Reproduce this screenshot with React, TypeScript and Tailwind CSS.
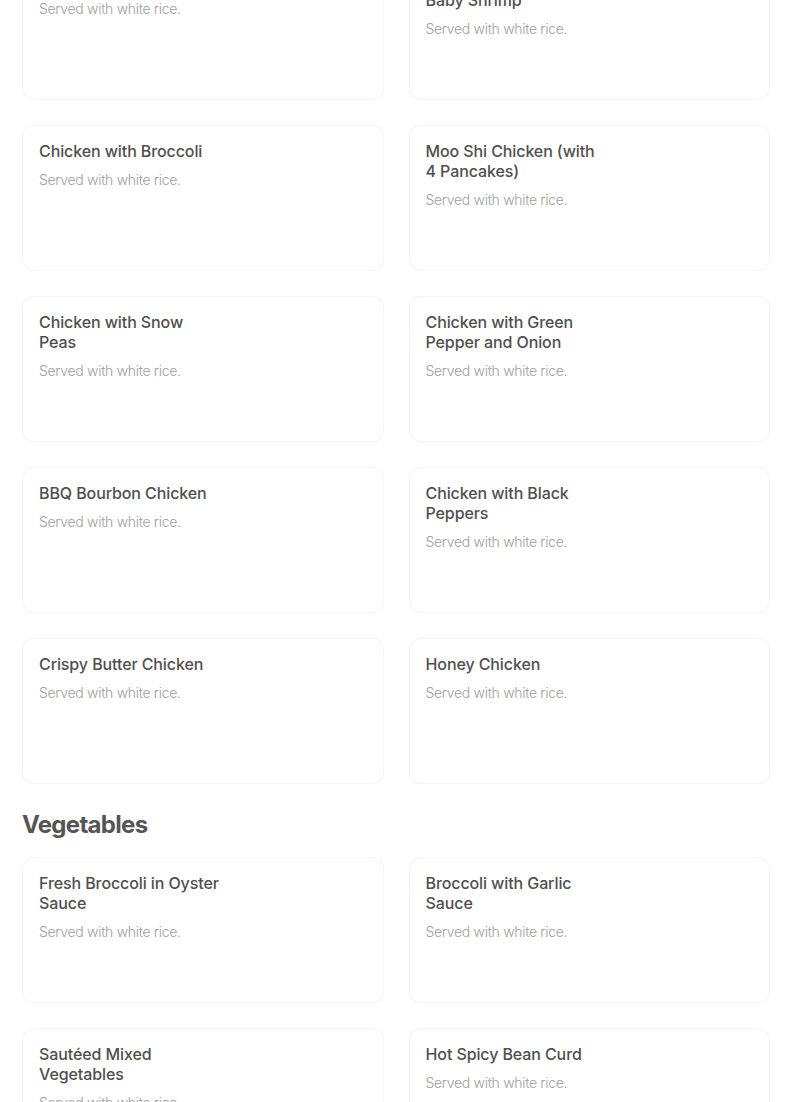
import React from 'react';

type Dish = { name: string; desc?: string };

const chicken: Dish[] = [
    { name: 'Kung Pao Shrimp' },
    { name: 'Mixed Vegetables with Baby Shrimp' },
    { name: 'Chicken with Broccoli' },
    { name: 'Moo Shi Chicken (with 4 Pancakes)' },
    { name: 'Chicken with Snow Peas' },
    { name: 'Chicken with Green Pepper and Onion' },
    { name: 'BBQ Bourbon Chicken' },
    { name: 'Chicken with Black Peppers' },
    { name: 'Crispy Butter Chicken' },
    { name: 'Honey Chicken' },
];

const vegetables: Dish[] = [
    { name: 'Fresh Broccoli in Oyster Sauce' },
    { name: 'Broccoli with Garlic Sauce' },
    { name: 'Sautéed Mixed Vegetables' },
    { name: 'Hot Spicy Bean Curd' },
];

const DishCard: React.FC<{ dish: Dish }> = ({ dish }) => (
    <div className="h-[146px] rounded-xl border border-[#f5f5f5] bg-white px-4 pt-[15px] shadow-[0_0_1px_rgba(0,0,0,0.04)]">
        <div className="max-w-[181.5px]">
            <p className="text-[16px] leading-5 font-medium tracking-[-0.1px] text-[#4f4f4f]">{dish.name}</p>
            <p className="mt-[9px] text-[14px] leading-5 font-light tracking-[-0.3px] text-[#9e9e9e]">{dish.desc ?? 'Served with white rice.'}</p>
        </div>
    </div>
);

const DishGrid: React.FC<{ items: Dish[] }> = ({ items }) => (
    <div className="grid grid-cols-2 gap-x-[25px] gap-y-[25px]">
        {items.map(d => (
            <DishCard key={d.name} dish={d} />
        ))}
    </div>
);

export default function App() {
    return (
        <div className="h-[1102px] overflow-hidden bg-white" style={{ fontFamily: 'Inter, "Noto Sans", sans-serif' }}>
            <div className="-mt-[46px] ml-[22px] w-[748px]">
                <DishGrid items={chicken} />

                <h2 className="mt-[25px] mb-[16px] text-[24px] leading-8 font-bold tracking-[-0.7px] text-[#555555]">Vegetables</h2>

                <DishGrid items={vegetables} />
            </div>
        </div>
    );
}
